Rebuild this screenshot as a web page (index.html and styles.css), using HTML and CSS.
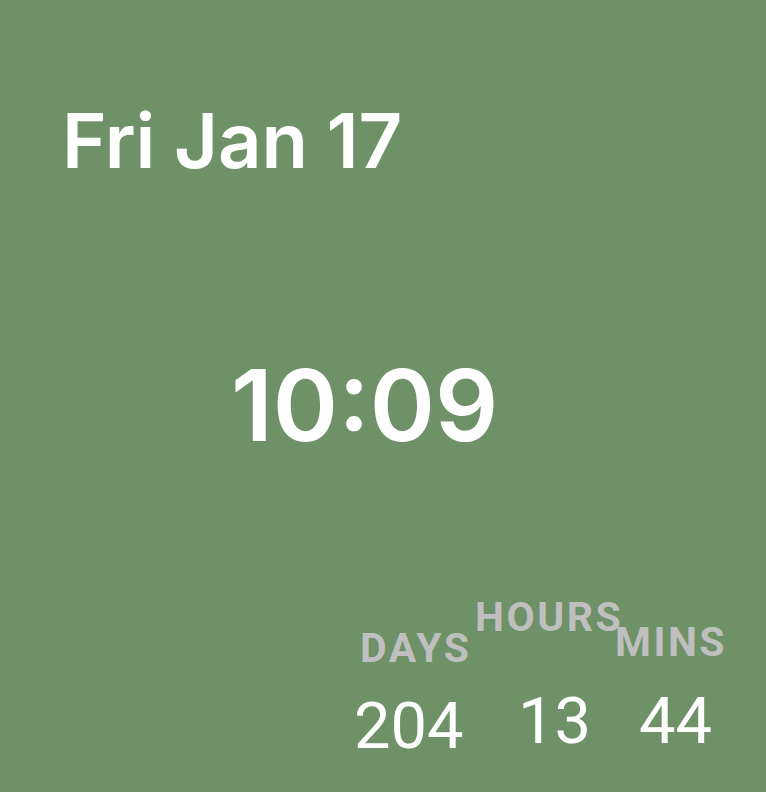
FILE: index.html
```html
<!DOCTYPE html>
<html>
<head>
<meta charset="utf-8">
<link rel="stylesheet" href="styles.css">
</head>
<body>
<div class="screen">
  <div class="date">Fri Jan 17</div>
  <div class="time">10:09</div>
  <div class="countdown">
    <div class="col col-days">
      <div class="label">DAYS</div>
      <div class="value">204</div>
    </div>
    <div class="col col-hours">
      <div class="label">HOURS</div>
      <div class="value">13</div>
    </div>
    <div class="col col-mins">
      <div class="label">MINS</div>
      <div class="value">44</div>
    </div>
  </div>
</div>
</body>
</html>
```

FILE: styles.css
```css
html, body {
  margin: 0;
  padding: 0;
  background: #6e9168;
}
.screen {
  width: 766px;
  height: 792px;
  box-sizing: border-box;
  padding-top: 102px;
  display: flex;
  flex-direction: column;
  color: #ffffff;
  overflow: hidden;
}
.date {
  font-family: Inter, "Noto Sans", sans-serif;
  font-weight: 600;
  font-size: 76px;
  line-height: 1;
  letter-spacing: -0.2px;
  padding-left: 62px;
  white-space: nowrap;
}
.time {
  font-family: Inter, "Noto Sans", sans-serif;
  font-weight: 600;
  font-size: 99px;
  line-height: 1;
  margin-top: 178px;
  padding-left: 231px;
  white-space: nowrap;
}
.countdown {
  display: flex;
  align-items: flex-start;
  margin-top: 141px;
  padding-left: 354px;
  font-family: Roboto, "Liberation Sans", sans-serif;
}
.col {
  display: flex;
  flex-direction: column;
  flex-shrink: 0;
}
.label {
  font-weight: 700;
  font-size: 41px;
  line-height: 1;
  letter-spacing: 2.5px;
  color: #bfbfbf;
  white-space: nowrap;
}
.value {
  font-weight: 400;
  font-size: 65px;
  line-height: 1;
  white-space: nowrap;
}
.col-days { width: 121px; }
.col-days .label { margin-top: 32px; margin-left: 6px; }
.col-days .value { margin-top: 25px; }
.col-hours { width: 140px; }
.col-hours .label { margin-top: 1px; }
.col-hours .value { margin-top: 51px; margin-left: 43px; }
.col-mins .label { margin-top: 26px; }
.col-mins .value { margin-top: 26px; margin-left: 24px; }
```
